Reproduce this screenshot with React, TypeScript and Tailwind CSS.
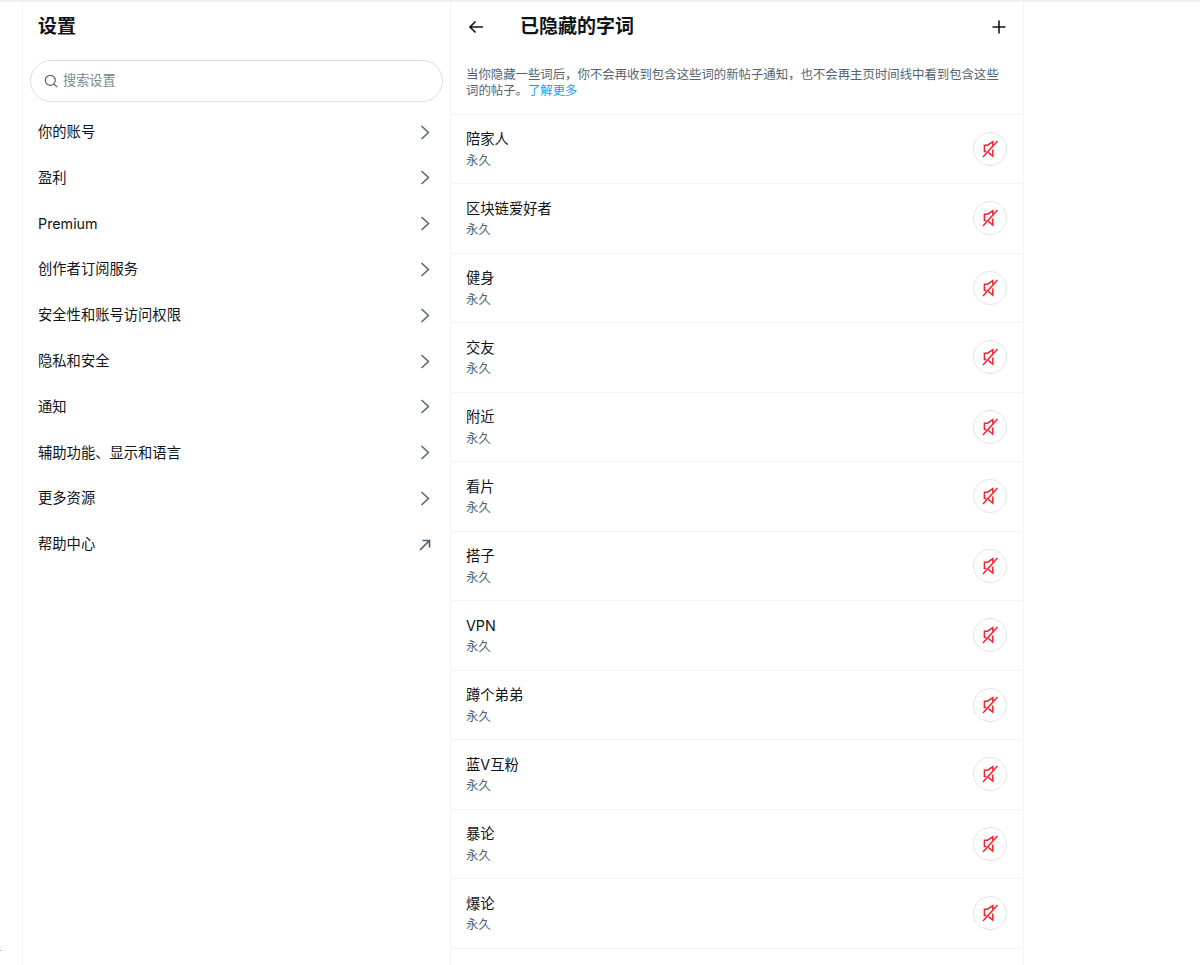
const font = { fontFamily: '"Inter", "Noto Sans CJK SC", sans-serif' };

const menuItems = [
  "你的账号",
  "盈利",
  "Premium",
  "创作者订阅服务",
  "安全性和账号访问权限",
  "隐私和安全",
  "通知",
  "辅助功能、显示和语言",
  "更多资源",
];

const mutedWords = [
  "陪家人",
  "区块链爱好者",
  "健身",
  "交友",
  "附近",
  "看片",
  "搭子",
  "VPN",
  "蹲个弟弟",
  "蓝V互粉",
  "暴论",
  "爆论",
];

function MuteIcon() {
  return (
    <svg viewBox="0 0 16 18" className="h-[18px] w-4 text-[#f4212e]" fill="none" stroke="currentColor" strokeWidth="1.5">
      <path d="M1 17 15.5 1" />
      <path d="M10.8 5.6V1.6L5.6 5.2H2.4v6.4h2" />
      <path d="M6.4 12.4l4.4 3.8V9.4" />
    </svg>
  );
}

function MenuRow({ label, external }: { label: string; external?: boolean }) {
  return (
    <div className="flex h-[45.8px] items-center justify-between pl-[15px] pr-[18px] text-[14.3px] text-[#0f1419]">
      <span>{label}</span>
      {external ? (
        <svg viewBox="0 0 14 14" className="h-[14px] w-[14px] text-[#4b5a73]" fill="none" stroke="currentColor" strokeWidth="1.6">
          <path d="M2 13 11.5 3.5M4.5 3.5h7v7" />
        </svg>
      ) : (
        <svg viewBox="0 0 14 16" className="h-4 w-[14px] text-[#536471]" fill="none" stroke="currentColor" strokeWidth="1.5">
          <path d="M3.5 2 10.5 8.5l-7 6.5" />
        </svg>
      )}
    </div>
  );
}

function WordRow({ word }: { word: string }) {
  return (
    <div className="flex h-[69.5px] items-start justify-between border-b border-[#f3f4f5] pl-[15px] pr-4">
      <div className="pt-[13.9px]">
        <div className="h-[22.2px] text-[14.3px] leading-[22px] text-[#0f1419]">{word}</div>
        <div className="h-[20px] text-[12.4px] leading-[20px] text-[#536471]">永久</div>
      </div>
      <button className="mt-[17px] flex h-[34px] w-[34px] items-center justify-center rounded-full border border-[#dfe4e8] bg-white">
        <MuteIcon />
      </button>
    </div>
  );
}

export default function App() {
  return (
    <div className="relative h-[965px] w-[1200px] overflow-hidden bg-white" style={font}>
      <div className="h-[2px] bg-[#eff1f2]" />
      <div className="ml-[22px] flex h-[963px] w-[1002px]">
        <aside className="w-[429px] shrink-0 border-x border-[#f3f4f5]">
          <div className="flex h-[50px] items-center pl-[15px] text-[19px] font-bold text-[#0f1419]">设置</div>
          <div className="mx-[7px] mt-[8px] flex h-[42px] w-[413px] items-center rounded-full border border-[#d9dee2] pl-[13px]">
            <svg viewBox="0 0 14 14" className="h-[14px] w-[14px] text-[#536471]" fill="none" stroke="currentColor" strokeWidth="1.2">
              <circle cx="6.3" cy="6.3" r="5" />
              <path d="m10 10 3.2 3.2" />
            </svg>
            <span className="ml-[5px] text-[13.2px] text-[#7a8791]">搜索设置</span>
          </div>
          <div className="mt-[6.8px]">
            {menuItems.map((item) => (
              <MenuRow key={item} label={item} />
            ))}
            <MenuRow label="帮助中心" external />
          </div>
        </aside>
        <main className="w-[573px] shrink-0 border-r border-[#f3f4f5]">
          <div className="flex h-[50px] items-center justify-between pl-[17px] pr-[17px]">
            <div className="flex items-center">
              <svg viewBox="0 0 16 16" className="h-4 w-4 text-[#0f1419]" fill="none" stroke="currentColor" strokeWidth="1.6">
                <path d="M15 8H2M7.5 2.5 2 8l5.5 5.5" />
              </svg>
              <span className="ml-[36px] text-[19px] font-bold text-[#0f1419]">已隐藏的字词</span>
            </div>
            <svg viewBox="0 0 14 14" className="h-[14px] w-[14px] text-[#0f1419]" fill="none" stroke="currentColor" strokeWidth="1.6">
              <path d="M7 0.5v13M0.5 7h13" />
            </svg>
          </div>
          <div className="h-[62.5px] border-b border-[#f3f4f5] pl-[15px] pr-[22px] pt-[15px] text-[12.4px] leading-[16px] text-[#536471]">
            当你隐藏一些词后，你不会再收到包含这些词的新帖子通知，也不会再主页时间线中看到包含这些词的帖子。
            <span className="inline-block text-[#1d9bf0]">了解更多</span>
          </div>
          {mutedWords.map((word) => (
            <WordRow key={word} word={word} />
          ))}
        </main>
      </div>
      <div className="absolute left-0 top-[950px] h-[1px] w-[1px] bg-[#9aa0a6]" />
    </div>
  );
}
